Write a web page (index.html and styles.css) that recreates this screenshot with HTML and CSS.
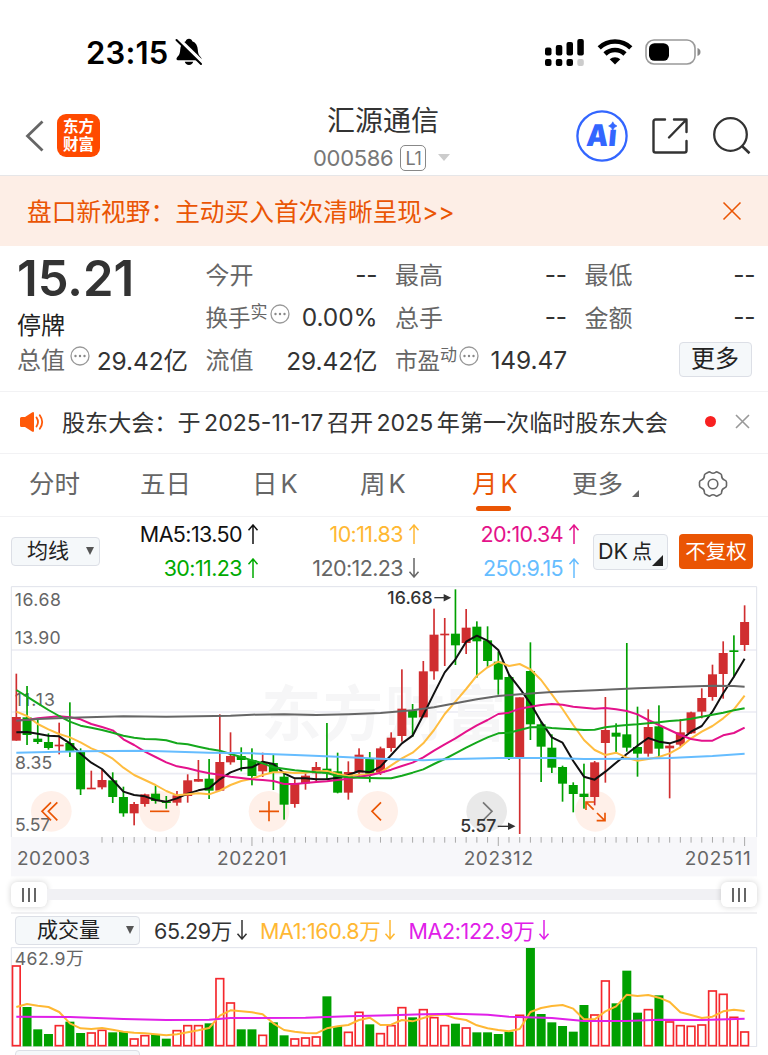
FILE: index.html
```html
<!DOCTYPE html>
<html lang="zh-CN">
  <head>
    <meta charset="UTF-8" />
    <meta name="viewport" content="width=device-width, initial-scale=1.0" />
    <title>汇源通信 000586</title>
    <link rel="stylesheet" href="styles.css">
  </head>
  <body>
    <!-- Shared icons -->
    <svg class="defs" width="0" height="0">
      <symbol id="up" viewBox="0 0 12 20">
        <path d="M6 20V1M1.5 6.2L6 1l4.500 5.200" fill="none" stroke="currentColor" stroke-width="1.500" />
      </symbol>
      <symbol id="down" viewBox="0 0 12 20">
        <path d="M6 0v19M1.500 13.800L6 19l4.500-5.200" fill="none" stroke="currentColor" stroke-width="1.500" />
      </symbol>
      <symbol id="dots" viewBox="0 0 20 20">
        <circle cx="10" cy="10" r="9" fill="none" stroke="#999" stroke-width="1.300" />
        <g fill="#888">
          <circle cx="5.500" cy="10" r="1.200" />
          <circle cx="10" cy="10" r="1.200" />
          <circle cx="14.500" cy="10" r="1.200" />
        </g>
      </symbol>
    </svg>

    <!-- Status bar -->
    <div class="status">
      <span class="clock">23:15</span>
      <svg class="bell" width="28" height="28" viewBox="0 0 28 28">
        <path d="M14 .8c1.800 0 3 1 3.300 2.400 3.600 1.400 5.300 4.500 5.500 8.600.2 4.500 1.600 6 3.200 7.600 1 1.100.6 2.800-1 2.800H3c-1.600 0-2-1.700-1-2.800 1.600-1.600 3-3.100 3.200-7.600.2-4.100 1.900-7.200 5.500-8.600C11 1.800 12.200.8 14 .8z" />
        <path d="M9.800 23.800h8.400c-.4 2-2 3.200-4.200 3.200s-3.800-1.200-4.200-3.200z" />
        <path d="M2.500 .5L28 25.500" stroke="#fff" stroke-width="4.500" />
        <path d="M1.500 2L26 26" stroke="#000" stroke-width="2" stroke-linecap="round" />
      </svg>
      <svg class="signal" width="39" height="27" viewBox="0 0 39 27">
        <rect x="0" y="8.500" width="6.500" height="8" rx="2" />
        <rect x="10.800" y="6" width="6.500" height="10.500" rx="2" />
        <rect x="21.500" y="3" width="6.500" height="13.500" rx="2" />
        <rect x="32.300" y="0" width="6.500" height="16.500" rx="2" />
        <rect x="0" y="20" width="6.500" height="7" rx="2" />
        <rect x="10.800" y="20" width="6.500" height="7" rx="2" />
        <rect x="21.500" y="20" width="6.500" height="7" rx="2" />
        <rect x="32.300" y="20" width="6.500" height="7" rx="2" fill="#ccc" />
      </svg>
      <svg class="wifi" width="36" height="26" viewBox="0 0 36 26">
        <path d="M2.200 8.800a23 23 0 0 1 31.600 0M8 15a14.500 14.500 0 0 1 20 0" fill="none" stroke="#000" stroke-width="4.600" />
        <path d="M18 25.500l-5.300-5.200a7.600 7.600 0 0 1 10.600 0z" />
      </svg>
      <svg class="battery" width="57" height="26" viewBox="0 0 57 26">
        <rect x="1" y="1" width="49" height="24" rx="8" fill="none" stroke="#999" stroke-width="1.600" />
        <rect x="4" y="4.200" width="20" height="17.600" rx="5.500" />
        <path d="M52.500 9c2.300.8 3 2.300 3 4s-.7 3.200-3 4z" fill="#888" />
      </svg>
    </div>

    <!-- Title bar -->
    <header class="navbar">
      <svg class="back" width="20" height="32" viewBox="0 0 20 32">
        <path d="M17.500 1.500L2.500 16l15 14.500" fill="none" stroke="#666" stroke-width="2.800" />
      </svg>
      <div class="logo">东方<br />财富</div>
      <div class="title">
        <h1>汇源通信</h1>
        <p>000586 <span class="level">L1</span><i class="caret"></i></p>
      </div>
      <div class="tools">
        <svg width="52" height="52" viewBox="0 0 52 52">
          <circle cx="26" cy="26" r="24.600" fill="none" stroke="#36f" stroke-width="2.300" />
          <text class="ai" x="13" y="36" textLength="30" lengthAdjust="spacingAndGlyphs" transform="skewX(-5)">Aı</text>
          <path d="M36.800 11.800q1 3.200 4.200 4.200-3.200 1-4.200 4.200-1-3.200-4.200-4.200 3.200-1 4.200-4.200z" fill="#36f" stroke="#36f" stroke-width=".6" />
        </svg>
        <svg width="38" height="38" viewBox="0 0 38 38">
          <path d="M14 2.500H4.500a2 2 0 0 0-2 2v29a2 2 0 0 0 2 2h29a2 2 0 0 0 2-2V24M23 2.500h12.500V15M35 3L18 20.500" fill="none" stroke="#333" stroke-width="2.400" stroke-linecap="round" stroke-linejoin="round" />
        </svg>
        <svg width="40" height="40" viewBox="0 0 40 40">
          <circle cx="18.500" cy="18.500" r="16.300" fill="none" stroke="#333" stroke-width="2.300" />
          <path d="M30 30l7.500 7.200" stroke="#333" stroke-width="2.600" />
        </svg>
      </div>
    </header>

    <!-- Promo -->
    <div class="banner">
      <span>盘口新视野：主动买入首次清晰呈现&gt;&gt;</span>
      <svg width="20" height="20" viewBox="0 0 20 20">
        <path d="M1.500 1.500l17 17M18.500 1.500l-17 17" stroke="#ea5504" stroke-width="1.600" />
      </svg>
    </div>

    <!-- Quote -->
    <section class="quote">
      <div class="last">
        <strong>15.21</strong>
        <span>停牌</span>
      </div>
      <div class="cell"><label>今开</label><b>--</b></div>
      <div class="cell"><label>最高</label><b>--</b></div>
      <div class="cell"><label>最低</label><b>--</b></div>
      <div class="cell small"><label>换手<sup>实</sup></label><svg class="info"><use href="#dots" /></svg><b>0.00%</b></div>
      <div class="cell"><label>总手</label><b>--</b></div>
      <div class="cell"><label>金额</label><b>--</b></div>
      <div class="cell cap"><label>总值</label><svg class="info"><use href="#dots" /></svg><b>29.42亿</b></div>
      <div class="cell"><label>流值</label><b>29.42亿</b></div>
      <div class="cell small"><label>市盈<sup>动</sup></label><svg class="info"><use href="#dots" /></svg><b>149.47</b></div>
      <div class="cell"><button class="more">更多</button></div>
    </section>

    <!-- Notice -->
    <div class="notice">
      <svg width="24" height="20" viewBox="0 0 24 20">
        <path d="M0 6.500q0-1.500 1.500-1.500H5l7-4.600q2-1 2 1v17.200q0 2-2 1L5 15H1.500Q0 15 0 13.500z" fill="#ff5a0a" />
        <path d="M16.500 5.500q3 4.500 0 9M19.800 3.200q4.800 6.800 0 13.600" fill="none" stroke="#ff5a0a" stroke-width="1.800" stroke-linecap="round" />
      </svg>
      <p>股东大会：于<em>2025-11-17</em>召开<em>2025</em>年第一次临时股东大会</p>
      <i class="dot"></i>
      <svg width="15" height="15" viewBox="0 0 15 15">
        <path d="M1 1l13 13M14 1L1 14" stroke="#999" stroke-width="1.600" />
      </svg>
    </div>

    <!-- Period tabs -->
    <nav class="tabs">
      <a>分时</a>
      <a>五日</a>
      <a>日<em>K</em></a>
      <a>周<em>K</em></a>
      <a class="active">月<em>K</em></a>
      <a class="fold">更多</a>
      <svg width="30" height="28" viewBox="0 0 30 28">
        <path d="M10.300 2.200q1.200-.7 2.200.2 2.500 1.800 5 0 1-.9 2.200-.2l3 1.700q1.100.7.900 2 .1 3 2.900 4.100 2 .7 2 2.200v3.600q0 1.500-2 2.200-2.800 1.100-2.900 4.100.2 1.300-.9 2l-3 1.700q-1.200.7-2.200-.2-2.500-1.800-5 0-1 .9-2.200.2l-3-1.700q-1.100-.7-.9-2-.1-3-2.900-4.100-2-.7-2-2.200v-3.600q0-1.500 2-2.200 2.800-1.100 2.900-4.100-.2-1.300.9-2z" fill="none" stroke="#666" stroke-width="1.600" />
        <circle cx="15" cy="14" r="4.800" fill="none" stroke="#666" stroke-width="1.600" />
      </svg>
    </nav>

    <!-- Moving averages -->
    <div class="averages">
      <button class="select">均线<i class="arrow"></i></button>
      <ul>
        <li class="ma5">MA5:13.50<svg><use href="#up" /></svg></li>
        <li class="ma10">10:11.83<svg><use href="#up" /></svg></li>
        <li class="ma20">20:10.34<svg><use href="#up" /></svg></li>
        <li class="ma30">30:11.23<svg><use href="#up" /></svg></li>
        <li class="ma120">120:12.23<svg><use href="#down" /></svg></li>
        <li class="ma250">250:9.15<svg><use href="#up" /></svg></li>
      </ul>
      <button class="dk">DK<span>点</span></button>
      <button class="adjust">不复权</button>
    </div>

    <!-- Candlestick chart -->
    <svg class="kline" viewBox="0 18 2304 873">
      <rect x="33" y="771" width="2238" height="118" fill="#f7f7fa" />
      <path class="grid" d="M33 210H2271M33 396H2271M33 581H2271" />
      <path class="frame" d="M34 771V20H2270V771" />
      <text class="watermark" x="784" y="468" textLength="735">东方财富</text>
      <g class="controls">
        <circle cx="154" cy="694" r="61" />
        <circle cx="479" cy="694" r="61" />
        <circle cx="807" cy="694" r="61" />
        <circle cx="1133" cy="694" r="61" />
        <circle class="off" cx="1460" cy="694" r="61" />
        <circle cx="1786" cy="694" r="61" />
      </g>
      <g class="scale">
        <text x="44" y="79" textLength="139">16.68</text>
        <text x="44" y="191" textLength="138">13.90</text>
        <text x="44" y="378" textLength="121">11.13</text>
        <text x="45" y="567" textLength="112">8.35</text>
        <text x="45" y="753" textLength="106">5.57</text>
      </g>
      <g class="dates">
        <text x="51" y="856" textLength="219">202003</text>
        <text x="651" y="856" textLength="209">202201</text>
        <text x="1391" y="856" textLength="208">202312</text>
        <text x="2054" y="856" textLength="198">202511</text>
      </g>
      <g id="ticks"></g>
      <g id="candles"></g>
      <g id="lines"></g>
      <!-- Chart controls -->
      <g class="controls">
        <path d="M153 667l-27 27 27 27M172 667l-27 27 27 27" />
        <path d="M450 694h58" />
        <path d="M777 694h60M807 664v60" />
        <path d="M1143 667l-27 27 27 27" />
        <path class="off" d="M1449 667l27 27-27 27" />
        <path d="M1781 689l-22-22M1758 690v-24h24M1791 699l23 22M1815 698v24h-25" />
      </g>
      <g class="marks">
        <text x="1162" y="71" textLength="136">16.68</text>
        <path d="M1303 53h32" />
        <path class="tip" d="M1333 45l16 8-16 8z" />
        <text x="1381" y="757" textLength="108">5.57</text>
        <path d="M1493 739h34" />
        <path class="tip" d="M1526 731l16 8-16 8z" />
      </g>
    </svg>

    <!-- Range slider -->
    <div class="range">
      <span class="handle"><i></i><i></i><i></i></span>
      <span class="track"></span>
      <span class="handle"><i></i><i></i><i></i></span>
    </div>

    <!-- Volume -->
    <div class="volume-head">
      <button class="select wide">成交量<i class="arrow"></i></button>
      <span class="vol">65.29万<svg><use href="#down" /></svg></span>
      <span class="vol ma10">MA1:160.8万<svg><use href="#down" /></svg></span>
      <span class="vol ma2">MA2:122.9万<svg><use href="#down" /></svg></span>
    </div>
    <svg class="volume" viewBox="0 231 2304 300">
      <path class="frame" d="M34 530V233H2270V530z" />
      <text class="max" x="44" y="286" textLength="207">462.9万</text>
      <g id="bars"></g>
    </svg>
    <div class="next-head"><button class="select wide"></button></div>

    <script src="chart.js"></script>
  </body>
</html>
```
FILE: styles.css
```css
* {
  box-sizing: border-box;
}
body {
  margin: 0;
  width: 768px;
  height: 1055px;
  overflow: hidden;
  background: #fff;
  color: #333;
  font-family: Inter, "Noto Sans CJK SC", sans-serif;
  font-size: 24px;
}
svg {
  display: block;
  flex: none;
}
em,
i {
  font-style: normal;
}
button {
  font: inherit;
  color: #222;
  padding: 0;
  background: #f5f8fa;
  border: 1px solid #dcdfe6;
  border-radius: 4px;
}
.defs {
  position: absolute;
}

/* Status bar */
.status {
  display: flex;
  align-items: center;
  height: 104px;
  padding: 0 66px 0 86px;
}
.clock {
  width: 89px;
  font-size: 31px;
  font-weight: 600;
  color: #000;
  letter-spacing: 0.2px;
}
.signal {
  margin-left: auto;
}
.wifi {
  margin-left: 13px;
}
.battery {
  margin-left: 12px;
}

/* Title bar */
.navbar {
  display: flex;
  align-items: center;
  height: 71px;
  padding: 0 16px 8px 25px;
}
.logo {
  width: 43px;
  height: 43px;
  margin-left: 12px;
  padding-top: 4px;
  border-radius: 9px;
  background: #ff4a00;
  color: #fff;
  font-size: 15.5px;
  font-weight: 700;
  line-height: 17.5px;
  text-align: center;
}
.title {
  width: 150px;
  margin-left: 210px;
  padding-top: 6px;
}
.title h1 {
  margin: 0 0 0 17px;
  font-size: 28px;
  font-weight: 400;
  line-height: 36px;
  white-space: nowrap;
}
.title p {
  display: flex;
  align-items: center;
  margin: 2px 0 0 3px;
  font-size: 22px;
  line-height: 34px;
  letter-spacing: -0.3px;
  color: #777;
}
.level {
  width: 26px;
  height: 26px;
  margin-left: 7px;
  border: 1px solid #888;
  border-radius: 5px;
  font-size: 18px;
  line-height: 25px;
  text-align: center;
}
.caret {
  margin-left: 12px;
  border: 6.5px solid transparent;
  border-top: 7px solid #ccc;
  border-bottom: 0;
}
.tools {
  display: flex;
  align-items: center;
  gap: 23px;
  margin-left: auto;
}
.ai {
  fill: #36f;
  font-size: 30px;
  font-weight: 900;
}

/* Promo */
.banner {
  display: flex;
  align-items: center;
  justify-content: space-between;
  height: 71px;
  padding: 0 26px 1px 27px;
  border-top: 1px solid #e6e6e8;
  background: #fdeee6;
  color: #ea5504;
  font-size: 24.7px;
}
.banner span {
  margin-bottom: 2px;
}

/* Quote */
.quote {
  display: grid;
  grid-template-columns: 171px 172px 172px 171px;
  grid-template-rows: repeat(3, 42.5px);
  column-gap: 17.5px;
  height: 145px;
  padding: 8px 11px 0 17px;
}
.last {
  grid-row: span 2;
}
.last strong {
  display: block;
  font-size: 49px;
  font-weight: 600;
  line-height: 50px;
}
.last span {
  display: block;
  font-size: 24px;
  line-height: 43px;
  color: #222;
}
.cell {
  display: flex;
  align-items: center;
  white-space: nowrap;
}
.cell label {
  margin-bottom: 3px;
  color: #666;
  font-size: 24px;
}
.cell b {
  margin-left: auto;
  margin-bottom: 1px;
  font-size: 24.5px;
  font-weight: 400;
  letter-spacing: -0.1px;
}
.cell.small label {
  font-size: 22.5px;
}
.cell sup {
  font-size: 17px;
  line-height: 0;
  vertical-align: 8px;
}
.info {
  width: 20px;
  height: 20px;
  margin: 0 0 8px 2px;
}
.cap .info {
  margin-left: 5px;
}
.more {
  width: 73px;
  height: 35px;
  margin: 0 4px 2px auto;
  font-size: 24px;
  line-height: 32px;
}

/* Notice */
.notice {
  display: flex;
  align-items: center;
  height: 63px;
  padding: 0 18px 2px 20px;
  border-top: 1px solid #f2f2f4;
  border-bottom: 1px solid #f2f2f4;
}
.notice p {
  margin: 0 auto 2px 18px;
  font-size: 23.1px;
  white-space: nowrap;
}
.notice em {
  margin: 0 3.500px;
}
.dot {
  width: 11px;
  height: 11px;
  margin-right: 19px;
  border-radius: 50%;
  background: #f82020;
}

/* Period tabs */
.tabs {
  display: grid;
  grid-template-columns: 111px 112px 108px 112px 100px 126px 30px;
  align-items: center;
  height: 63px;
  padding: 0 0 2px 29px;
  border-bottom: 1px solid #f2f2f4;
  color: #666;
  font-size: 25.5px;
}
.tabs a {
  position: relative;
  line-height: 40px;
}
.tabs em {
  margin-left: 3px;
}
.tabs .active {
  color: #ea5504;
}
.tabs .active::after {
  content: "";
  position: absolute;
  left: 4px;
  bottom: -7px;
  width: 35px;
  height: 5px;
  border-radius: 3px;
  background: #ea5504;
}
.fold::after {
  content: "";
  display: inline-block;
  margin-left: 9px;
  margin-bottom: -4px;
  border-left: 7px solid transparent;
  border-bottom: 7px solid #666;
}

/* Moving averages */
.averages {
  display: flex;
  align-items: center;
  height: 69px;
  padding-left: 11px;
}
.select {
  display: flex;
  align-items: center;
  justify-content: space-between;
  width: 89px;
  height: 29px;
  padding: 0 5px 1px 15px;
  font-size: 21px;
  line-height: 26px;
}
.arrow {
  border: 4.5px solid transparent;
  border-top: 8px solid #555;
  border-bottom: 0;
}
.averages ul {
  display: grid;
  grid-template-columns: 159px 161px 160px;
  grid-template-rows: 33.5px 33.5px;
  width: 480px;
  margin: 0 0 1px;
  padding: 0;
  list-style: none;
  font-size: 21.5px;
  letter-spacing: -0.6px;
}
.averages li {
  display: flex;
  align-items: center;
  justify-content: flex-end;
}
.averages li svg,
.vol svg {
  width: 12px;
  height: 20px;
  margin-left: 5px;
}
.ma5 {
  color: #111;
}
.ma10 {
  color: #ffb833;
}
.ma20 {
  color: #e4128b;
}
.ma30 {
  color: #0a0;
}
.ma120 {
  color: #666;
}
.ma250 {
  color: #66bdff;
}
.ma2 {
  color: #e020e8;
}
.dk {
  position: relative;
  width: 75px;
  height: 36px;
  margin-left: 13px;
  padding: 0 0 0 4px;
  font-size: 21.5px;
  line-height: 33px;
  text-align: left;
}
.dk span {
  margin-left: 4px;
  font-size: 20px;
}
.dk::after {
  content: "";
  position: absolute;
  right: 4px;
  bottom: 3px;
  border-left: 11px solid transparent;
  border-bottom: 11px solid #222;
}
.adjust {
  width: 74px;
  height: 35px;
  margin-left: 11px;
  border: 0;
  background: #ea5504;
  color: #fff;
  font-size: 20.5px;
  line-height: 34px;
}

/* Charts */
.kline {
  width: 768px;
  height: 291px;
}
.grid,
.frame {
  fill: none;
  stroke: #ebecf3;
  stroke-width: 5;
}
.frame {
  stroke: #dfe2ea;
  stroke-width: 3;
}
.watermark {
  fill: #f6f6f7;
  font-size: 180px;
  font-weight: 700;
}
.scale {
  fill: #666;
  font-size: 53px;
}
.dates {
  fill: #666;
  font-size: 57px;
}
.marks {
  fill: #333;
  stroke: #333;
  stroke-width: 4;
  font-size: 53px;
  font-weight: 500;
}
.marks text {
  stroke: none;
}
.controls circle {
  fill: #fff0e9;
}
.controls circle.off {
  fill: #e9e9e9;
}
.controls path {
  fill: none;
  stroke: #ea5504;
  stroke-width: 5;
}
.controls path.off {
  stroke: #777;
}
.tick {
  stroke: #aaa;
  stroke-width: 3;
}
.line {
  fill: none;
  stroke-width: 6;
  stroke-linejoin: round;
}

/* Range slider */
.range {
  display: flex;
  align-items: center;
  height: 35px;
  padding: 0 11px;
}
.track {
  flex: 1;
  height: 11px;
  background: #f1f1f4;
}
.handle {
  display: flex;
  align-items: center;
  justify-content: center;
  gap: 4px;
  width: 36px;
  height: 25px;
  border-radius: 6px;
  background: #fff;
  box-shadow: 0 0 6px rgba(0, 0, 0, 0.18);
}
.handle i {
  width: 2px;
  height: 14px;
  background: #666;
}

/* Volume */
.volume-head {
  display: flex;
  align-items: center;
  height: 35px;
  margin: 0 11px;
  padding-left: 4px;
  border-top: 2px solid #f0f0f2;
}
.wide {
  width: 125px;
  padding-left: 21px;
}
.vol {
  display: flex;
  align-items: center;
  margin-left: 14px;
  margin-bottom: 2px;
  font-size: 21.5px;
  letter-spacing: -0.35px;
}
.vol svg {
  margin-left: 4px;
}
.vol + .vol {
  margin-left: 12px;
}
.volume {
  width: 768px;
  height: 100px;
}
.max {
  fill: #666;
  font-size: 53px;
}
.next-head {
  padding: 3px 15px;
}
```
FILE: chart.js
```js
const NS = "http://www.w3.org/2000/svg";
const RED = "#d02e30";
const GREEN = "#00a000";
const STEP = 32.13;
const x = (i) => 49 + i * STEP;

function add(parent, tag, attrs) {
  const el = document.createElementNS(NS, tag);
  for (const key in attrs) el.setAttribute(key, attrs[key]);
  document.getElementById(parent).appendChild(el);
}

// up / down, high, body top, body bottom, low
const candles = [
  "r 281 411 482 482", "g 318 412 465 495", "g 418 476 486 492", "g 460 486 504 509",
  "r 428 494 498 523", "g 367 489 515 531", "g 505 513 628 645", "r 572 623 627 627",
  "r 568 600 622 628", "g 577 601 651 669", "g 620 651 700 710", "r 666 672 700 736",
  "r 641 643 672 680", "g 617 641 663 671", "g 648 664 668 686", "r 633 646 668 677",
  "r 583 601 648 668", "r 540 597 605 605", "g 537 596 632 657", "r 403 546 632 632",
  "r 457 528 547 554", "g 502 528 540 574", "g 505 540 588 616", "r 518 549 574 591",
  "g 525 549 579 630", "g 580 590 674 719", "r 598 610 672 683", "r 580 587 610 629",
  "r 546 561 580 605", "g 429 566 580 598", "g 518 574 638 640", "r 544 576 638 659",
  "r 505 524 578 588", "g 516 535 584 607", "r 500 505 578 585", "r 457 473 504 515",
  "r 268 386 468 485", "g 372 391 413 470", "r 243 274 412 412", "r 86 164 274 299",
  "r 114 161 165 258", "g 28 161 196 255", "r 87 143 189 222", "g 124 140 184 293",
  "g 139 181 243 260", "g 215 245 299 344", "g 285 291 535 540", "r 352 352 533 762",
  "g 187 273 433 480", "g 424 433 500 606", "g 463 503 563 579", "g 557 561 611 665",
  "g 607 615 642 697", "g 551 641 651 686", "r 543 547 651 676", "r 351 450 489 608",
  "g 430 458 470 522", "g 189 463 503 515", "g 380 501 521 590", "r 388 441 521 530",
  "g 376 439 506 530", "r 490 497 505 655", "r 417 457 494 500", "r 395 397 460 462",
  "r 325 354 395 415", "r 254 283 351 362", "r 184 219 282 356", "g 166 211 215 292",
  "r 76 126 195 213",
];

candles.forEach((row, i) => {
  const [dir, ...v] = row.split(" ");
  const [high, top, bottom, low] = v.map(Number);
  const fill = dir === "r" ? RED : GREEN;
  add("candles", "rect", { x: x(i) - 2.5, y: high, width: 5, height: low - high, fill });
  add("candles", "rect", { x: x(i) - 13.5, y: top, width: 27, height: Math.max(bottom - top, 5), fill });
  if (i >= 8) {
    const major = i === 22 || i === 45 || i === 68;
    add("ticks", "path", { class: "tick", d: `M${x(i)} 771v${major ? 27 : 17}` });
  }
});

// Draws a line through [index, y] points
function line(parent, color, points) {
  const d = points.map(([i, y]) => `${x(i)},${y}`).join(" ");
  add(parent, "polyline", { class: "line", stroke: color, points: d });
}
const each = (list) => list.map((y, i) => [i, y]);

line("lines", "#111", each([
  457, 456, 461, 467, 469, 490, 521, 548, 567, 600, 635, 645, 649, 660, 665, 655, 641, 631,
  625, 598, 577, 565, 562, 545, 552, 580, 595, 595, 598, 598, 593, 585, 573, 577, 560, 525,
  490, 467, 405, 340, 277, 238, 185, 167, 182, 210, 284, 325, 370, 425, 472, 488, 543, 590,
  599, 575, 548, 522, 497, 474, 485, 490, 480, 455, 438, 395, 340, 290, 236,
]));
line("lines", "#ffbd40", each([
  395, 408, 432, 448, 462, 472, 487, 505, 518, 536, 563, 585, 600, 615, 633, 646, 643, 640,
  643, 632, 615, 603, 596, 585, 577, 577, 579, 578, 574, 573, 582, 588, 584, 583, 578, 556,
  535, 518, 490, 450, 402, 365, 327, 287, 262, 245, 258, 252, 268, 300, 343, 387, 435, 480,
  510, 525, 518, 533, 542, 537, 531, 520, 502, 475, 455, 438, 415, 388, 347,
]));
line("lines", "#e4128b", each([
  420, 420, 415, 412, 409, 412, 418, 432, 441, 451, 478, 495, 515, 531, 547, 559, 565, 573,
  580, 584, 590, 594, 598, 600, 603, 612, 612, 609, 606, 604, 600, 596, 590, 586, 578, 569,
  558, 548, 532, 512, 493, 475, 455, 436, 420, 402, 398, 386, 380, 375, 372, 374, 380, 383,
  386, 384, 388, 393, 403, 420, 435, 450, 465, 477, 482, 482, 466, 459, 443,
]));
line("lines", "#14a81c", each([
  330, 350, 370, 390, 408, 425, 437, 443, 450, 458, 467, 473, 477, 478, 481, 490, 493, 500,
  507, 512, 522, 531, 541, 550, 562, 566, 571, 574, 577, 579, 588, 592, 593, 594, 595, 595,
  587, 578, 568, 552, 537, 520, 503, 487, 472, 460, 458, 450, 442, 441, 444, 446, 448, 450,
  449, 442, 438, 435, 433, 430, 427, 423, 421, 416, 410, 404, 398, 391, 385,
]));
line("lines", "#666", [
  [0, 422], [2, 417], [5, 413], [10, 409], [14, 410], [20, 407], [22, 404], [25, 403],
  [28, 405], [31, 403], [34, 399], [37, 391], [39, 382], [41, 370], [43, 358], [45, 348],
  [47, 343], [50, 336], [54, 331], [58, 325], [62, 320], [65, 317], [67, 318], [68, 320],
]);
line("lines", "#66bdff", [
  [0, 518], [6, 514], [12, 512], [18, 518], [22, 520], [26, 525], [30, 530], [34, 536],
  [38, 541], [40, 538], [45, 534], [50, 534], [53, 537], [58, 536], [61, 534], [65, 528],
  [68, 521],
]);

// Volume bars, top edge
const volume = `r286 g411 g478 g492 r465 g455 g489 r487 r479 g487 g485 r505 r495 g492 g506
  r480 r465 r465 g460 r324 r397 g478 g478 r494 g457 g496 r505 r502 r499 g379 g468 r485
  r425 g463 r489 r465 r411 g442 r417 r441 r465 g461 r472 g487 g487 g492 g485 r434 g234
  g432 g457 g468 g485 g405 r433 r331 g400 g302 g428 r417 g376 r454 r465 r467 r463 r361
  r371 r440 r484`.split(/\s+/);

volume.forEach((bar, i) => {
  const top = Number(bar.slice(1));
  if (bar[0] === "g") {
    add("bars", "rect", { x: x(i) - 13.5, y: top, width: 27, height: 529 - top, fill: GREEN });
  } else {
    add("bars", "rect", {
      x: x(i) - 11.5, y: top + 2, width: 23, height: 525 - top,
      fill: "#fff", stroke: "#f5282d", "stroke-width": 5,
    });
  }
});

line("bars", "#ffb833", each([
  411, 402, 407, 411, 426, 460, 475, 477, 474, 479, 485, 488, 490, 493, 496, 493, 487, 481,
  474, 437, 421, 424, 427, 433, 460, 480, 485, 489, 490, 475, 469, 465, 450, 443, 465, 464,
  450, 454, 444, 435, 434, 445, 450, 466, 475, 480, 484, 477, 426, 414, 408, 405, 416, 448,
  448, 424, 409, 374, 378, 375, 383, 396, 427, 435, 444, 440, 424, 419, 423,
]));
line("bars", "#e020e8", [
  [0, 440], [5, 441], [10, 447], [14, 450], [18, 449], [20, 444], [27, 443], [31, 439],
  [35, 436], [38, 433], [41, 431], [44, 434], [46, 440], [50, 444], [53, 453], [57, 453],
  [60, 449], [64, 450], [68, 446],
]);
```
